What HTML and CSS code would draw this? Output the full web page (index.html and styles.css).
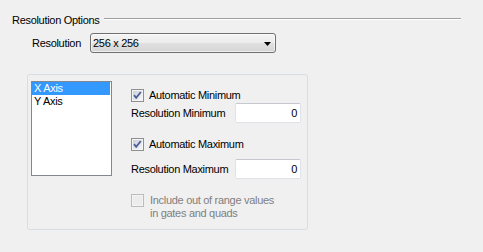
FILE: index.html
```html
<!DOCTYPE html>
<html>
<head>
<meta charset="utf-8">
<link rel="stylesheet" href="styles.css">
</head>
<body>
<div class="page">
  <div class="group-head">
    <span class="group-title">Resolution Options</span>
    <span class="group-rule"></span>
  </div>
  <div class="res-row">
    <span class="res-label">Resolution</span>
    <div class="combo">
      <span class="combo-value">256 x 256</span>
      <svg class="combo-arrow" width="7" height="4" viewBox="0 0 7 4"><polygon points="0,0 7,0 3.5,4" fill="#000"/></svg>
    </div>
  </div>
  <div class="panel">
    <ul class="axis-list">
      <li class="axis-item selected">X Axis</li>
      <li class="axis-item">Y Axis</li>
    </ul>
    <div class="options">
      <div class="check-row">
        <svg class="check" width="13" height="13" viewBox="0 0 13 13">
          <defs><linearGradient id="cg1" x1="0" y1="0" x2="1" y2="1"><stop offset="0" stop-color="#cbcfd5"/><stop offset="1" stop-color="#f7f7f7"/></linearGradient></defs>
          <rect x="0.5" y="0.5" width="12" height="12" fill="#f4f4f4" stroke="#8f8f8f"/>
          <rect x="2" y="2" width="9" height="9" fill="url(#cg1)"/>
          <path d="M3 6.2 L5.2 8.8 L9.8 3" fill="none" stroke="#4a5f97" stroke-width="1.8"/>
        </svg>
        <span class="check-text">Automatic Minimum</span>
      </div>
      <div class="field-row first">
        <span class="field-label">Resolution Minimum</span>
        <div class="num-input">0</div>
      </div>
      <div class="check-row second">
        <svg class="check" width="13" height="13" viewBox="0 0 13 13">
          <defs><linearGradient id="cg2" x1="0" y1="0" x2="1" y2="1"><stop offset="0" stop-color="#cbcfd5"/><stop offset="1" stop-color="#f7f7f7"/></linearGradient></defs>
          <rect x="0.5" y="0.5" width="12" height="12" fill="#f4f4f4" stroke="#8f8f8f"/>
          <rect x="2" y="2" width="9" height="9" fill="url(#cg2)"/>
          <path d="M3 6.2 L5.2 8.8 L9.8 3" fill="none" stroke="#4a5f97" stroke-width="1.8"/>
        </svg>
        <span class="check-text">Automatic Maximum</span>
      </div>
      <div class="field-row">
        <span class="field-label">Resolution Maximum</span>
        <div class="num-input">0</div>
      </div>
      <div class="check-row disabled">
        <svg class="check" width="13" height="13" viewBox="0 0 13 13">
          <rect x="0.5" y="0.5" width="12" height="12" fill="#f4f4f4" stroke="#bcbcbc"/>
          <rect x="2" y="2" width="9" height="9" fill="#ececec"/>
        </svg>
        <span class="check-text multi">Include out of range values<br>in gates and quads</span>
      </div>
    </div>
  </div>
</div>
</body>
</html>
```

FILE: styles.css
```css
html, body {
  margin: 0;
  padding: 0;
  background: #f0f0f0;
}
body {
  font-family: "Liberation Sans", Arial, sans-serif;
  font-size: 11px;
  line-height: 13px;
  letter-spacing: -0.3px;
  color: #000;
  width: 483px;
  height: 252px;
  overflow: hidden;
}
.group-head {
  display: flex;
  padding: 14px 22px 0 12px;
}
.group-title {
  white-space: nowrap;
}
.group-rule {
  flex: 1;
  height: 0;
  margin: 4px 0 0 4px;
  border-top: 1px solid #a0a0a0;
  border-bottom: 1px solid #ffffff;
}
.res-row {
  display: flex;
  align-items: center;
  margin-top: 6px;
  padding-left: 32px;
}
.res-label {
  width: 58px;
}
.combo {
  box-sizing: border-box;
  width: 186px;
  height: 20px;
  border: 1px solid #707070;
  border-radius: 3px;
  background: linear-gradient(to bottom, #f4f4f4 0%, #ececec 50%, #e0e0e0 51%, #d6d6d6 100%);
  box-shadow: inset 0 0 0 1px rgba(255,255,255,0.6);
  display: flex;
  align-items: center;
  padding: 0 3px 0 2px;
}
.combo-value {
  flex: 1;
}
.combo-arrow {
  display: block;
  margin-right: 1px;
  margin-top: 1px;
}
.panel {
  box-sizing: border-box;
  width: 281px;
  height: 156px;
  margin: 21px 0 0 27px;
  border: 1px solid #d5dfe5;
  border-radius: 3px;
  padding: 6px 5px 0 3px;
  display: flex;
  align-items: flex-start;
}
.axis-list {
  box-sizing: border-box;
  list-style: none;
  margin: 0;
  padding: 0 1px 0 0;
  width: 81px;
  height: 95px;
  border: 1px solid #828790;
  background: #fff;
}
.axis-item {
  height: 13px;
  padding-left: 2px;
}
.axis-item.selected {
  background: #3399ff;
  color: #fff;
}
.options {
  width: 170px;
  margin: 8px 0 0 19px;
  display: flex;
  flex-direction: column;
}
.check-row {
  display: flex;
  align-items: center;
  height: 13px;
}
.check {
  display: block;
  flex: none;
}
.check-text {
  margin-left: 5px;
  white-space: nowrap;
}
.check-row.second {
  margin-top: 15px;
}
.check-row.disabled {
  align-items: flex-start;
  height: auto;
  margin-top: 15px;
  color: #7f7f7f;
}
.check-row.disabled .check-text {
  margin-left: 6px;
}
.field-row {
  display: flex;
  justify-content: space-between;
  align-items: center;
  height: 20px;
  margin-top: 8px;
}
.field-row.first {
  margin-top: 1px;
}
.num-input {
  box-sizing: border-box;
  width: 66px;
  height: 20px;
  border: 1px solid #dfe3e8;
  border-top-color: #c5c9cf;
  border-radius: 2px;
  background: #fff;
  text-align: right;
  padding-right: 3px;
  line-height: 18px;
}
```
